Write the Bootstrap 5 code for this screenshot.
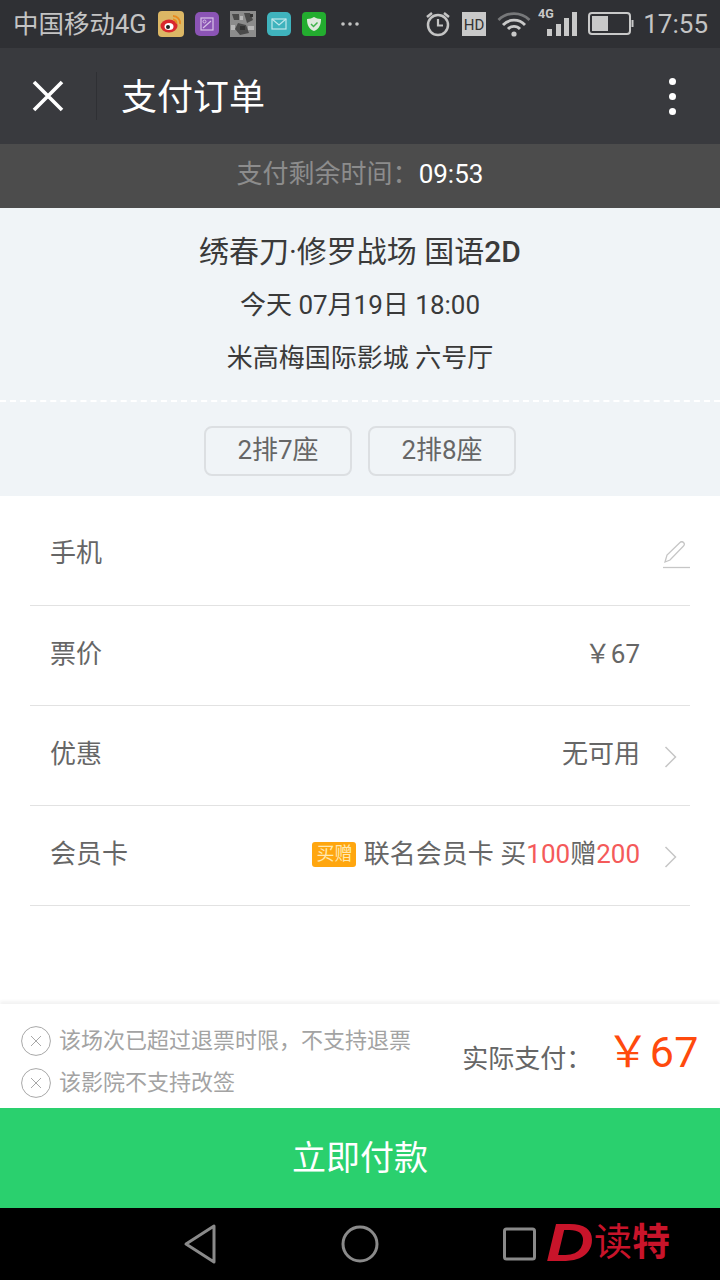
<!DOCTYPE html>
<html lang="zh-CN">
<head>
  <meta charset="UTF-8">
  <meta name="viewport" content="width=device-width, initial-scale=1.0">
  <title>支付订单</title>
  <link href="https://cdn.jsdelivr.net/npm/bootstrap@5.3.0/dist/css/bootstrap.min.css" rel="stylesheet">
  <style>
    html, body { margin: 0; padding: 0; }
    body {
      width: 720px; height: 1280px; overflow: hidden;
      font-family: Roboto, "Noto Sans CJK SC", sans-serif;
      background: #fff; color: #666;
    }
    .screen { width: 720px; height: 1280px; position: relative; }
    .status-bar { height: 48px; background: #2f3034; color: #c4c4c4; font-size: 25.500px; padding: 0 12px 0 13px; }
    .status-left { gap: 11px; }
    .carrier { line-height: 48px; }
    .clock { font-size: 26px; margin-left: 9px; }
    .title-bar { height: 96px; background: #393a3e; color: #fff; }
    .close-cell { width: 97px; height: 48px; border-right: 1px solid #2f3034; padding-left: 32px; }
    .page-title { font-size: 36px; margin-left: 24px; line-height: 48px; padding-top: 3px; }
    .more-dots { margin-left: auto; margin-right: 44px; gap: 8px; }
    .more-dots i { display: block; width: 7px; height: 7px; border-radius: 50%; background: #fff; }
    .timer-bar { height: 64px; background: #4c4c4c; color: #8c8c8c; font-size: 26px; padding-bottom: 4px; }
    .timer-bar b { color: #fff; font-weight: 400; }
    .order-info { height: 288px; background: #f0f4f7; color: #333; }
    .movie-name { font-size: 30px; line-height: 40px; padding-top: 24px; color: #3a3a3a; }
    .movie-name b { font-weight: 500; }
    .movie-line { font-size: 26px; line-height: 36px; margin-top: 15px; color: #3a3a3a; }
    .movie-line + .movie-line { margin-top: 17px; }
    .dash-line { border-top: 2px dashed #fff; margin-top: 24px; height: 0; }
    .seat-row { gap: 16px; margin-top: 24px; }
    .seat-tag {
      width: 148px; height: 50px; line-height: 44px; text-align: center;
      border: 2px solid #dcdfe2; border-radius: 8px; font-size: 26px; color: #666;
    }
    .info-list { padding: 0 30px; }
    .info-row {
      height: 100px; border-bottom: 1px solid #e2e2e2; font-size: 26px; color: #666;
      padding: 0 0 2px 20px;
    }
    .info-row:first-child { height: 110px; padding-bottom: 0; padding-top: 6px; }
    .row-value { margin-left: auto; width: 100%; text-align: right; padding-right: 50px; position: relative; white-space: nowrap; }
    .row-icon { position: absolute; right: 13px; top: 50%; transform: translateY(-50%); display: block; margin-top: 2px; }
    .row-icon.pen { right: 0; margin-top: 1px; }
    .row-label { flex: none; }
    .buy-tag {
      display: inline-block; width: 44px; height: 25px; line-height: 24px; background: #ffa60f; color: #ffe9b0;
      font-size: 18px; border-radius: 3px; text-align: center; vertical-align: 3px; margin-right: 1px;
    }
    .hot { color: #f45a5a; }
    .spacer { height: 98px; }
    .notice-bar { height: 104px; background: #fff; box-shadow: 0 -3px 3px rgba(0,0,0,.05); padding-left: 21px; padding-right: 21px; }
    .notice-list { gap: 12px; padding-top: 22px; }
    .notice-item { font-size: 22px; color: #a3a3a3; line-height: 30px; gap: 8px; }
    .pay-total { margin-left: auto; padding-top: 16px; }
    .pay-total span { font-size: 26px; color: #666; margin-right: 14px; position: relative; top: 1px; }
    .pay-total strong { font-size: 43px; font-weight: 400; color: #ff4a0d; letter-spacing: .5px; }
    .pay-btn {
      display: block; width: 100%; height: 100px; border: 0; border-radius: 0;
      background: #2ad06e; color: #fff; font-size: 34px;
    }
    .pay-btn:hover { background: #2ad06e; color: #fff; }
    .nav-bar { height: 72px; background: #000; position: relative; }
    .nav-bar svg { position: absolute; top: 14px; }
    .watermark { position: absolute; left: 546px; top: 0; height: 72px; color: #c8142a; white-space: nowrap; }
    .watermark em { display: inline-block; width: 48px; font: italic 900 53px/58px "Liberation Sans", sans-serif; transform: scaleX(1.25); transform-origin: left center; position: relative; top: -1px; }
    .watermark span { font: 400 38px/58px "Noto Sans CJK SC", sans-serif; position: relative; top: -5px; }
    .watermark span + span { font-weight: 700; }
  </style>
</head>
<body>
<div class="screen d-flex flex-column">

  <!-- Status bar -->
  <div class="status-bar d-flex align-items-center">
    <div class="status-left d-flex align-items-center">
      <span class="carrier">中国移动4G</span>
      <svg width="26" height="26" viewBox="0 0 26 26"><rect width="26" height="26" rx="4" fill="#dcb765"/><ellipse cx="11" cy="15" rx="8.500" ry="6.500" fill="#d9262c"/><ellipse cx="11" cy="15.500" rx="4.500" ry="3.500" fill="#fff"/><circle cx="10" cy="16" r="2" fill="#222"/><path d="M15 5a7 7 0 0 1 7 8M15 8.500a3.500 3.500 0 0 1 3.500 4" fill="none" stroke="#e88a1e" stroke-width="1.800"/></svg>
      <svg width="24" height="24" viewBox="0 0 24 24"><rect width="24" height="24" rx="5" fill="#8b54b5"/><rect x="6" y="6" width="12" height="12" fill="none" stroke="#d8c2e6" stroke-width="1.200"/><circle cx="9.500" cy="9.500" r="1.500" fill="none" stroke="#d8c2e6"/><path d="M8 16 16 9" stroke="#d8c2e6" stroke-width="1.200"/></svg>
      <svg width="26" height="26" viewBox="0 0 26 26"><rect width="26" height="26" fill="#8c8c8c"/><path d="M2 3h7v6H4zM14 2h6l3 7-6 3zM8 12l8 2 3 8-9 2-5-6z" fill="#4a4a4a"/><path d="M1 14h4v5H1zM18 15h6v4h-6zM10 5h3v4h-3z" fill="#b8b8b8"/><path d="M10 15h5v4h-5zM20 3h3v3h-3z" fill="#333"/></svg>
      <svg width="24" height="24" viewBox="0 0 24 24"><rect width="24" height="24" rx="5" fill="#3fb3bd"/><rect x="5" y="7" width="14" height="10" fill="none" stroke="#bfe6ea" stroke-width="1.200"/><path d="M5 7l7 6 7-6" fill="none" stroke="#bfe6ea" stroke-width="1.200"/></svg>
      <svg width="24" height="24" viewBox="0 0 24 24"><rect width="24" height="24" rx="4" fill="#23ad2f"/><path d="M5 7c3 0 5-1 7-2 2 1 4 2 7 2 0 6-2 10-7 12-5-2-7-6-7-12z" fill="#dfe9dc"/><path d="M9 12l2.500 2.500 4-4" fill="none" stroke="#3fb34a" stroke-width="1.500"/></svg>
      <svg width="20" height="6" viewBox="0 0 20 6" style="margin-left:3px"><circle cx="3" cy="3" r="1.800" fill="#c4c4c4"/><circle cx="10" cy="3" r="1.800" fill="#c4c4c4"/><circle cx="17" cy="3" r="1.800" fill="#c4c4c4"/></svg>
    </div>
    <div class="status-right d-flex align-items-center ms-auto">
      <svg width="26" height="28" viewBox="0 0 26 28"><circle cx="13" cy="15" r="10" fill="none" stroke="#c4c4c4" stroke-width="2.500"/><path d="M13 9v6.500h5" fill="none" stroke="#c4c4c4" stroke-width="2.200"/><path d="M2 7l5-4M24 7l-5-4" stroke="#c4c4c4" stroke-width="2.500"/></svg>
      <span class="d-inline-block" style="width:11px"></span>
      <svg width="24" height="24" viewBox="0 0 24 24"><rect width="24" height="24" fill="#c9c9c9"/><text x="12" y="18" text-anchor="middle" font-family="Roboto" font-size="15" fill="#333">HD</text></svg>
      <span class="d-inline-block" style="width:11px"></span>
      <svg width="34" height="26" viewBox="0 0 34 26"><path d="M1.500 9a22 22 0 0 1 31 0" fill="none" stroke="#77787a" stroke-width="2.800"/><path d="M6 14a15 15 0 0 1 22 0M11 18a8 8 0 0 1 12 0" fill="none" stroke="#c9c9c9" stroke-width="2.800"/><circle cx="17" cy="23" r="2.600" fill="#c9c9c9"/></svg>
      <span class="d-inline-block" style="width:6px"></span>
      <svg width="40" height="36" viewBox="0 0 40 36"><text x="1" y="12" font-family="Roboto" font-weight="700" font-size="12.500" fill="#c9c9c9">4G</text><rect x="10" y="23" width="5" height="7" fill="#c9c9c9"/><rect x="19" y="18" width="5" height="12" fill="#c9c9c9"/><rect x="27" y="12" width="5" height="18" fill="#c9c9c9"/><rect x="35" y="6" width="5" height="24" fill="#c9c9c9"/></svg>
      <span class="d-inline-block" style="width:11px"></span>
      <svg width="46" height="24" viewBox="0 0 46 24"><rect x="1" y="1" width="41" height="21" rx="3" fill="none" stroke="#c9c9c9" stroke-width="2"/><rect x="4" y="4" width="16" height="15" fill="#c9c9c9"/><rect x="43.500" y="8" width="2" height="7" fill="#c9c9c9"/></svg>
      <span class="clock">17:55</span>
    </div>
  </div>

  <!-- Title bar -->
  <div class="title-bar d-flex align-items-center">
    <div class="close-cell d-flex align-items-center">
      <svg width="32" height="32" viewBox="0 0 32 32"><path d="M2 2 30 30M30 2 2 30" stroke="#fff" stroke-width="3.600" fill="none"/></svg>
    </div>
    <div class="page-title">支付订单</div>
    <div class="more-dots d-flex flex-column"><i></i><i></i><i></i></div>
  </div>

  <!-- Countdown -->
  <div class="timer-bar d-flex align-items-center justify-content-center">支付剩余时间：<b>09:53</b></div>

  <!-- Order info -->
  <div class="order-info text-center">
    <div class="movie-name">绣春刀·修罗战场 国语<b>2D</b></div>
    <div class="movie-line">今天 07月19日 18:00</div>
    <div class="movie-line">米高梅国际影城 六号厅</div>
    <div class="dash-line"></div>
    <div class="seat-row d-flex justify-content-center">
      <div class="seat-tag">2排7座</div>
      <div class="seat-tag">2排8座</div>
    </div>
  </div>

  <!-- Rows -->
  <div class="info-list">
    <div class="info-row d-flex align-items-center">
      <span class="row-label">手机</span>
      <div class="row-value">
        <svg class="row-icon pen" width="28" height="28" viewBox="0 0 28 28"><path d="M3 21 5 14 18 1.500c1-1 2.500-1 3.500 0s1 2.500 0 3.500L8 19z" fill="none" stroke="#c6c6c6" stroke-width="1.300"/><path d="M1 26.500h27" stroke="#c6c6c6" stroke-width="1.300"/></svg>
      </div>
    </div>
    <div class="info-row d-flex align-items-center">
      <span class="row-label">票价</span>
      <div class="row-value">￥67</div>
    </div>
    <div class="info-row d-flex align-items-center">
      <span class="row-label">优惠</span>
      <div class="row-value">无可用
        <svg class="row-icon" width="13" height="22" viewBox="0 0 13 22"><path d="M1.500 1 11.500 11 1.500 21" fill="none" stroke="#c6c6c6" stroke-width="1.500"/></svg>
      </div>
    </div>
    <div class="info-row d-flex align-items-center">
      <span class="row-label">会员卡</span>
      <div class="row-value"><span class="buy-tag">买赠</span> 联名会员卡 买<span class="hot">100</span>赠<span class="hot">200</span>
        <svg class="row-icon" width="13" height="22" viewBox="0 0 13 22"><path d="M1.500 1 11.500 11 1.500 21" fill="none" stroke="#c6c6c6" stroke-width="1.500"/></svg>
      </div>
    </div>
  </div>

  <div class="spacer"></div>

  <!-- Notices and total -->
  <div class="notice-bar d-flex">
    <div class="notice-list d-flex flex-column">
      <div class="notice-item d-flex align-items-center">
        <svg width="30" height="30" viewBox="0 0 30 30"><circle cx="15" cy="15" r="14.400" fill="none" stroke="#a8a8a8" stroke-width="1"/><path d="M10 10 20 20M20 10 10 20" stroke="#a8a8a8" stroke-width="1"/></svg>
        <span>该场次已超过退票时限，不支持退票</span>
      </div>
      <div class="notice-item d-flex align-items-center">
        <svg width="30" height="30" viewBox="0 0 30 30"><circle cx="15" cy="15" r="14.400" fill="none" stroke="#a8a8a8" stroke-width="1"/><path d="M10 10 20 20M20 10 10 20" stroke="#a8a8a8" stroke-width="1"/></svg>
        <span>该影院不支持改签</span>
      </div>
    </div>
    <div class="pay-total"><span>实际支付：</span><strong>￥67</strong></div>
  </div>

  <button type="button" class="btn pay-btn">立即付款</button>

  <!-- Android nav -->
  <div class="nav-bar">
    <svg style="left:182px" width="38" height="44" viewBox="0 0 38 44"><path d="M4 22 32 4v36z" fill="none" stroke="#8a8a8a" stroke-width="3" stroke-linejoin="round"/></svg>
    <svg style="left:340px" width="40" height="44" viewBox="0 0 40 44"><circle cx="20" cy="22" r="17" fill="none" stroke="#8a8a8a" stroke-width="3"/></svg>
    <svg style="left:502px" width="36" height="44" viewBox="0 0 36 44"><rect x="2.500" y="7" width="30" height="30" rx="2" fill="none" stroke="#8a8a8a" stroke-width="3"/></svg>
    <div class="watermark d-flex align-items-center"><em>D</em><span>读</span><span>特</span></div>
  </div>
</div>
<script src="https://cdn.jsdelivr.net/npm/bootstrap@5.3.0/dist/js/bootstrap.bundle.min.js"></script>
</body>
</html>
